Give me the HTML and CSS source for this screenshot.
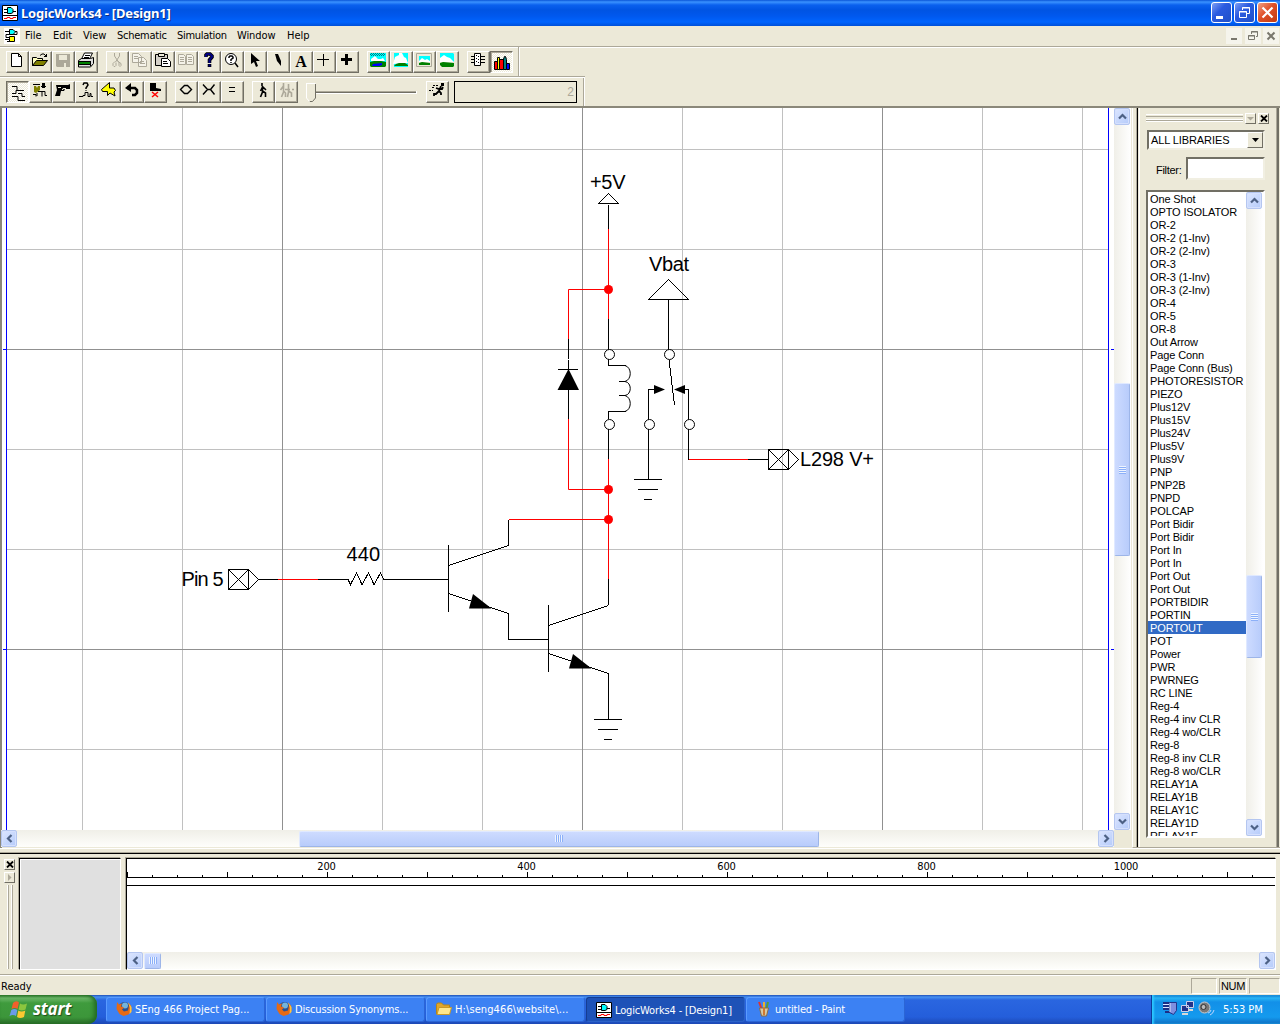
FILE: index.html
```html
<!DOCTYPE html>
<html lang="en">
<head>
<meta charset="utf-8">
<title>LogicWorks4 - [Design1]</title>
<link rel="stylesheet" href="styles.css">
</head>
<body>
<svg class="defs" width="0" height="0">
  <symbol id="app" viewBox="0 0 16 16"><path fill="#fff" stroke="#000" d="M.5.5h15v15H.5z"/><path stroke="#000" d="M2 4.500h3M2 7.500h3M11 6.500h3M1 10.500h14"/><path fill="#0ff" stroke="#000" d="M5.500 2.500H9l2 2v3l-2 1H5.500z"/><path fill="none" stroke="red" d="M2 13.500h3v-1h3v1h3v-1h3"/></symbol>
  <symbol id="doc" viewBox="0 0 16 16"><path fill="#fff" d="M0 0h16v16H0z"/><path fill="none" stroke="#000" d="M1 3.500h4M11 3.500h2v3h-11v3h4M1 11.500h4M3 13.500h3"/><path fill="#0ff" stroke="#000" d="M5.500 1.500H9l2 2v1l-2 2H5.500z"/><path fill="#ff0" stroke="#000" d="M5.500 8.500h5v5h-5z"/></symbol>
  <symbol id="new" viewBox="0 0 16 16"><path fill="#fff" stroke="#000" d="M2.500 1.500h7l3 3v10h-10zM9.500 1.500v3h3"/></symbol>
  <symbol id="open" viewBox="0 0 16 16"><path fill="#ffffc0" stroke="#000" d="M.5 13.500v-8h4l1 1h5v7z"/><path fill="#808000" stroke="#000" d="M.5 13.500l4-5h11l-4 5z"/><path fill="none" stroke="#000" d="M8 3.500l2-1.500h2l2 2M12 4.500h3M14.500 2v3"/></symbol>
  <symbol id="save" viewBox="0 0 16 16"><path fill="#aca899" d="M1 2h14v13H2l-1-1z"/><path fill="#ece9d8" d="M4 3h8v5H4zM9 11h2v4H9z"/></symbol>
  <symbol id="print" viewBox="0 0 16 16"><path fill="#fff" stroke="#000" d="M3.500 7l3-6h8l-3 6zM7 3.500h5M6 5.500h5"/><path fill="#ddd" stroke="#000" d="M.5 8.500l3-2h9l3-1v6l-3 3.500H.5z"/><path stroke="#008000" stroke-width="2" d="M1 11h11"/><path stroke="#000" d="M1 9.500h12M1 12.500h12M12.500 9v5"/></symbol>
  <symbol id="cut" viewBox="0 0 16 16"><path fill="none" stroke="#aca899" d="M5.500 1v3l4 6M10.500 1v3l-4 6M6 9.500l-2 2v2l1 1h1l1-1v-3M9 9.500l1 1v3l1 1 1-1v-2z"/></symbol>
  <symbol id="copy" viewBox="0 0 16 16"><path fill="#f5f3e9" stroke="#aca899" d="M.5 1.500h6l3 3v6h-9zM6.500 5.500h5l3 3v6h-8zM2 4.500h4M2 6.500h4M8 9.500h4M8 11.500h5"/></symbol>
  <symbol id="paste" viewBox="0 0 16 16"><path fill="#d4d0c8" stroke="#000" d="M.5 2.500h12v11H.5z"/><path fill="#ece9d8" stroke="#000" d="M3.500 1.500h6v3h-6z"/><path fill="#fff" stroke="#000" d="M6.500 6.500h6l3 3v5h-9zM8 9.500h4M8 11.500h5"/></symbol>
  <symbol id="dup" viewBox="0 0 16 16"><path fill="#f5f3e9" stroke="#aca899" d="M.5 2.500h5l2 2v8h-7zM8.500 2.500h5l2 2v8h-7zM2 5.500h4M2 7.500h4M2 9.500h4M10 5.500h4M10 7.500h4M10 9.500h4"/></symbol>
  <symbol id="help" viewBox="0 0 16 16"><path fill="none" stroke="#000" stroke-width="3.600" d="M5 5V3l1-1h3l2 2v1L8.500 8v3M8.500 12v3"/><path fill="none" stroke="#000080" stroke-width="2" d="M5 5V3l1-1h3l2 2v1L8.500 8v3M8.500 12.500v2"/></symbol>
  <symbol id="query" viewBox="0 0 16 16"><circle cx="7" cy="7" r="5.500" fill="#fff" stroke="#000"/><path fill="none" stroke="#000" stroke-width="1.500" d="M5 6V5l1-1h2l1 1v1L7 7.500V9M7 10v1M11 11l3 4"/></symbol>
  <symbol id="arrow" viewBox="0 0 16 16"><path d="M4 1l9 8H9l2 5-2 1-2-5-3 2z"/></symbol>
  <symbol id="pen" viewBox="0 0 16 16"><path d="M5 2h3l3 7v5L7 9z"/></symbol>
  <symbol id="plus" viewBox="0 0 16 16"><path stroke="#000" d="M1 7.500h12M7.500 2v12"/></symbol>
  <symbol id="boldplus" viewBox="0 0 16 16"><path stroke="#000" stroke-width="3" d="M2 7.500h11M7.500 2v11"/></symbol>
  <symbol id="land1" viewBox="0 0 16 14"><path fill="#0ff" d="M0 0h16v9H0z"/><path stroke="#008080" stroke-dasharray="1 1" d="M1 .5h14M0 1.500h16M1 2.500h14"/><path fill="#fff" d="M1 8V6l4-3 3 3h3l2-1 2 3z"/><path fill="green" d="M0 9l4-1h7l5 1v4l-1 1H1l-1-1z"/><path fill="#00f" d="M3 11l9-1v2l-3 1H2z"/></symbol>
  <symbol id="land2" viewBox="0 0 16 14"><path fill="#0ff" d="M1 0h14v14H1z"/><path fill="#fff" d="M0 11l2-7 4-2V0h3l2 4 2 1 2 5z"/><path fill="green" d="M3 11l3-1h6l3 2v1H1z"/></symbol>
  <symbol id="land3" viewBox="0 0 16 14"><path fill="#ece9d8" stroke="#aca899" d="M.5.5h15v13H.5z"/><path fill="#0ff" d="M3 3h11v5H3z"/><path fill="#fff" d="M3 8l3-3 3 2 2-1 3 2v1H3z"/><path fill="green" d="M3 10l3-1 8 1v2H3z"/></symbol>
  <symbol id="land4" viewBox="0 0 16 14"><path fill="#0ff" d="M1 0h13l1 1v8H1z"/><path fill="#fff" d="M1 9V5l4-3 3 2 3 1 4 4z"/><path fill="green" d="M1 10l3-1 11 1v3l-1 1H3l-2-2z"/></symbol>
  <symbol id="chip" viewBox="0 0 16 16"><path stroke="#000" d="M1 4.500h14M1 7.500h14M1 10.500h14"/><path fill="#fff" stroke="#000" d="M4.500 1.500h6v12h-6z"/><path stroke="#000" stroke-dasharray="1 2" d="M6.500 3v9M8.500 4v8"/></symbol>
  <symbol id="books" viewBox="0 0 16 16"><path fill="red" stroke="#000" d="M.5 6.500h3v8h-3zM5.500 4.500h4v10h-4z"/><path fill="#ff0" stroke="#000" d="M3.500 2.500h2v12h-2z"/><path fill="#008080" stroke="#000" d="M9.500 4l1-2.500h1l1 3v10h-3z"/><path fill="#00f" stroke="#000" d="M12.500 8.500h3v6h-3z"/></symbol>
  <symbol id="sig" viewBox="0 0 16 16"><path fill="none" stroke="#000" d="M2 1.500h5v4h7M2 8.500h4V5.500h3M2 11.500h6v4h7M8 8.500h4v3h3"/></symbol>
  <symbol id="probe" viewBox="0 0 16 16"><path fill="#808000" d="M2 4h2l1 2 1-2h2v4l-4 3-2-1z"/><path fill="none" stroke="#000" d="M1 2.500h7M9 4.500h5M1 12.500h3v2M5 11v3M6 9.500h4v5M10 9.500h3v4h2"/><path d="M10 1h3v5h-3z"/></symbol>
  <symbol id="gun" viewBox="0 0 16 16"><path d="M1 3h12l2-1v5h-5L9 9H6l-1 5H0l2-6z"/><path fill="none" stroke="#ece9d8" d="M3 5.500h3M7 7.500h1v-1h3"/></symbol>
  <symbol id="qsig" viewBox="0 0 16 16"><path fill="none" stroke="#000" stroke-width="1.500" d="M5 3l1-2h3l1 2-2 3v1"/><path fill="none" stroke="#000" d="M1 14.500h4v-1h2v-3h3v4h2v-3h1v3h2M8 8v1"/></symbol>
  <symbol id="bolt" viewBox="0 0 16 16"><path fill="#ff0" stroke="#000" d="M8.500.5L.5 7.500l1 2h5v4L9 11l5 3-1-4 1.500-1.500L13 6H8.500z"/></symbol>
  <symbol id="undo" viewBox="0 0 16 16"><path fill="none" stroke="#000" stroke-width="2.500" d="M3 6h8l2 2v3l-2 2H8"/><path d="M1 6l6-5v9z"/></symbol>
  <symbol id="kick" viewBox="0 0 16 16"><path d="M3 1h6v5l5 1v2H3z"/><path stroke="red" stroke-width="1.500" d="M5 10l6 5M11 10l-6 5"/></symbol>
  <symbol id="diamond" viewBox="0 0 16 16"><path fill="none" stroke="#000" stroke-width="1.400" d="M2.500 7.500l4-4h3l4 4-4 4h-3z"/></symbol>
  <symbol id="cross" viewBox="0 0 16 16"><path fill="none" stroke="#000" stroke-width="1.400" d="M2 2.500l4.500 5h3l4-5M2 12.500l4.500-5h3l4 5"/></symbol>
  <symbol id="equal" viewBox="0 0 16 16"><path stroke="#000" d="M5 5.500h6M5 9.500h6"/></symbol>
  <symbol id="walk" viewBox="0 0 16 16"><path fill="none" stroke="currentColor" stroke-width="1.600" d="M7 1v3M7.500 4v6l-2 5M7.500 9l3 2v4M7.500 5l-2 4M8 5l3 3"/></symbol>
  <symbol id="walks" viewBox="0 0 16 16"><path fill="none" stroke="currentColor" stroke-width="1.600" d="M5.500 1v9l-2 5M5.500 9l2 2v4M5.500 4l-3 4M10.500 2v8l-1 5M10.500 9l3 2v4M7 7.500h5M14 7.500h2"/></symbol>
  <symbol id="run" viewBox="0 0 16 16"><path d="M12 1h3v3h-3z"/><path fill="none" stroke="#000" stroke-width="1.800" d="M12 4l-2 5 2 2v2M10 9l-3 3H5v2M7 6l3 1h3l1-2"/><path stroke="#000" stroke-dasharray="2 1" d="M4 3.500h5M3 5.500h3M0 8.500h4"/></symbol>
  <symbol id="up" viewBox="0 0 9 9"><path fill="none" stroke="#4d6185" stroke-width="2.200" d="M1 6.500L4.500 3 8 6.500"/></symbol>
  <symbol id="down" viewBox="0 0 9 9"><path fill="none" stroke="#4d6185" stroke-width="2.200" d="M1 2.500L4.500 6 8 2.500"/></symbol>
  <symbol id="left" viewBox="0 0 9 9"><path fill="none" stroke="#4d6185" stroke-width="2.200" d="M6.500 1L3 4.500 6.500 8"/></symbol>
  <symbol id="right" viewBox="0 0 9 9"><path fill="none" stroke="#4d6185" stroke-width="2.200" d="M2.500 1L6 4.500 2.500 8"/></symbol>
  <symbol id="fox" viewBox="0 0 16 16"><circle cx="8.500" cy="7.500" r="6.500" fill="#2b4f8f"/><circle cx="9" cy="4.500" r="3" fill="#74b4da"/><path fill="#e66a15" d="M1 1l2 2.500 3-1-1 3 3 1-2 2 2 2 4-1 1-5-1-3 3 3 .5 5-3 4-5 1.500-4-2L.5 8z"/><path fill="#ffc23c" d="M12 1.500l3.500 4.500v5l-2 2 .5-6z"/></symbol>
  <symbol id="folder" viewBox="0 0 16 16"><path fill="#e0a62b" stroke="#b98512" d="M.5 13V3.500l1-1.500h4l2 2h6v9z"/><path fill="#ffe68a" stroke="#c99a28" d="M1 13.500l2-7h12.500l-2 7z"/></symbol>
  <symbol id="paint" viewBox="0 0 16 16"><path stroke="#d33" stroke-width="2" d="M3 1l3 8"/><path stroke="#e8b030" stroke-width="2" d="M8 1v8"/><path stroke="#579b36" stroke-width="2" d="M12 1l-2 8"/><path fill="#d8c9a0" stroke="#8a6a45" d="M3.500 7h9l-2 8h-5z"/><path stroke="#d07830" stroke-width="2" d="M8 7v7"/></symbol>
  <symbol id="xs" viewBox="0 0 8 7"><path stroke="#000" stroke-width="1.800" d="M1 .5l6 6M7 .5l-6 6"/></symbol>
</svg>

<div class="screen">
  <header class="titlebar">
    <svg class="i16"><use href="#app"/></svg><span class="title">LogicWorks4 - [Design1]</span>
    <div class="winbtns">
      <div class="wb"><svg width="19" height="19"><path fill="#fff" d="M4 13h7v3H4z"/></svg></div>
      <div class="wb"><svg width="19" height="19"><path fill="none" stroke="#fff" d="M7.500 7V4.500h7v6H12M7 5h8M4.500 8.500h7v6h-7zM4 9h8"/></svg></div>
      <div class="wb close"><svg width="19" height="19"><path stroke="#fff" stroke-width="2.200" d="M4.500 4.500l10 10M14.500 4.500l-10 10"/></svg></div>
    </div>
  </header>
  <nav class="menubar">
    <svg class="i16"><use href="#doc"/></svg>
    <span class="m1">File</span><span class="m2">Edit</span><span class="m3">View</span><span class="m4">Schematic</span><span class="m5">Simulation</span><span class="m6">Window</span><span class="m7">Help</span>
    <div class="mdi">
      <div><svg width="16" height="16"><path fill="#79776d" d="M5 10h6v2H5z"/></svg></div>
      <div><svg width="16" height="16"><path fill="none" stroke="#79776d" d="M6.500 6V3.500h6v5H11M6 4h7M3.500 7.500h6v4h-6zM3 8h7"/></svg></div>
      <div><svg width="16" height="16"><path stroke="#79776d" stroke-width="2" d="M4.500 4.500l7 7M11.500 4.500l-7 7"/></svg></div>
    </div>
  </nav>

  <div class="bars">
    <div class="bar bar1">
      <div class="grp"><b class="btn"><svg class="i16"><use href="#new"/></svg></b><b class="btn"><svg class="i16"><use href="#open"/></svg></b><b class="btn"><svg class="i16"><use href="#save"/></svg></b><b class="btn"><svg class="i16"><use href="#print"/></svg></b></div>
      <div class="grp"><b class="btn"><svg class="i16"><use href="#cut"/></svg></b><b class="btn"><svg class="i16"><use href="#copy"/></svg></b><b class="btn"><svg class="i16"><use href="#paste"/></svg></b><b class="btn"><svg class="i16"><use href="#dup"/></svg></b><b class="btn"><svg class="i16"><use href="#help"/></svg></b><b class="btn"><svg class="i16"><use href="#query"/></svg></b><b class="btn"><svg class="i16"><use href="#arrow"/></svg></b><b class="btn"><svg class="i16"><use href="#pen"/></svg></b><b class="btn letter">A</b><b class="btn"><svg class="i16"><use href="#plus"/></svg></b><b class="btn"><svg class="i16"><use href="#boldplus"/></svg></b></div>
      <div class="grp"><b class="btn"><svg class="land"><use href="#land1"/></svg></b><b class="btn"><svg class="land"><use href="#land2"/></svg></b><b class="btn"><svg class="land"><use href="#land3"/></svg></b><b class="btn"><svg class="land"><use href="#land4"/></svg></b></div>
      <div class="grp"><b class="btn"><svg class="i16"><use href="#chip"/></svg></b><b class="btn on"><svg class="i16"><use href="#books"/></svg></b></div>
    </div>
    <div class="bar bar2">
      <div class="grp"><b class="btn on"><svg class="i16"><use href="#sig"/></svg></b><b class="btn"><svg class="i16"><use href="#probe"/></svg></b><b class="btn"><svg class="i16"><use href="#gun"/></svg></b><b class="btn"><svg class="i16"><use href="#qsig"/></svg></b><b class="btn"><svg class="i16"><use href="#bolt"/></svg></b><b class="btn"><svg class="i16"><use href="#undo"/></svg></b><b class="btn"><svg class="i16"><use href="#kick"/></svg></b></div>
      <div class="grp"><b class="btn"><svg class="i16"><use href="#diamond"/></svg></b><b class="btn"><svg class="i16"><use href="#cross"/></svg></b><b class="btn"><svg class="i16"><use href="#equal"/></svg></b></div>
      <div class="grp"><b class="btn"><svg class="i16"><use href="#walk"/></svg></b><b class="btn off"><svg class="i16"><use href="#walks"/></svg></b></div>
      <svg class="slider" width="112" height="22"><path stroke="#aca899" d="M10 10.500h100"/><path stroke="#716f64" d="M10 11.500h100"/><path stroke="#fff" d="M10 12.500h101M110.500 10v3"/><path fill="#ece9d8" stroke="#fff" d="M.5 16V2.500h9"/><path fill="#ece9d8" d="M1 3h8v14l-4 3-4-4z"/><path fill="none" stroke="#716f64" d="M9.500 3v14l-3 3.500h-3"/><path fill="none" stroke="#fff" d="M.5 2v15l3 3.500"/></svg>
      <b class="btn"><svg class="i16"><use href="#run"/></svg></b>
      <div class="speed">2</div>
    </div>
  </div>

  <main class="work">
    <section class="doc">
      <svg class="canvas" width="1112" height="722" viewBox="2 108 1112 722">
        <g class="grid"><path d="M82.500 108v722M182.500 108v722M382.500 108v722M482.500 108v722M682.500 108v722M782.500 108v722M982.500 108v722M1082.500 108v722M7 149.500h1101M7 249.500h1101M7 449.500h1101M7 549.500h1101M7 749.500h1101"/>
        <path class="major" d="M282.500 108v722M582.500 108v722M882.500 108v722M7 349.500h1101M7 649.500h1101"/>
        <path class="page" d="M6.500 108v722M1108.500 108v722M3 349.500h3M3 649.500h3M1111 349.500h3M1111 649.500h3"/></g>
        <g class="ink">
          <path d="M598.500 203.500l10-10 10 10zM608.500 205v24M608.500 319v36M608.500 359v6.500h17M608.500 419v-7.500h17M608.500 425v34M608.500 579v26"/>
          <path d="M568.500 339v20M568.500 360v10M558 369.500h20M568.500 390v29"/>
          <path d="M648.500 299.500l20-20 20 20zM668.500 300v50M669 360l5.500 45M655 389.500h-6.500V479M684 389.500h4.500V459.500M748 459.500h20"/>
          <path d="M634 479.500h28M638 489.500h20M644 499.500h8M594 719.500h28M598 729.500h20M604 739.500h8"/>
          <path d="M768.500 449.500h20v20h-20zM768.500 449.500l20 20 10-10-10-10-20 20"/>
          <path d="M228.500 569.500h20v20h-20zM228.500 569.500l20 20 10-10-10-10-20 20"/>
          <path d="M258 579.500h20M318 579.500h30l2.500 5 6-11.500 5.500 11.500 6.500-11.500 5.500 11.500 6.500-11.500 3.500 6.500h64.500"/>
          <path d="M448.500 545v67M448.500 565.500l60-20V520M448.500 593.500l60 20v26h40M548.500 605v67M548.500 625.500l60-20M548.500 653.500l60 20V719"/>
        </g>
        <path class="curve" d="M625 365.500c7 2 7 14 0 16h-6M625 381.500c7 1 7 13 0 14h-6M625 395.500c7 2 7 14 0 16"/>
        <path class="net" d="M608.500 229v90M608.500 289.500h-40V339M568.500 419v70.500h40M608.500 459v120M509 519.500h99M689 459.500h59M278 579.500h40"/>
        <path d="M568.500 369l10.500 21h-21.500zM654 385v9l11-4.500zM685 385v9l-11-4.500zM473 594l-4 14.500h22.500zM573 654l-4 14.500h22.500z"/>
        <g class="pin"><circle cx="609.500" cy="354.500" r="5"/><circle cx="609.500" cy="424.500" r="5"/><circle cx="669.500" cy="354.500" r="5"/><circle cx="649.500" cy="424.500" r="5"/><circle cx="689.500" cy="424.500" r="5"/></g>
        <g class="dot"><circle cx="608.500" cy="289.500" r="4.500"/><circle cx="608.500" cy="489.500" r="4.500"/><circle cx="608.500" cy="519.500" r="4.500"/></g>
        <g class="label"><text x="590" y="189" textLength="35.500">+5V</text><text x="649" y="271" textLength="40">Vbat</text><text x="800" y="466" textLength="74">L298 V+</text><text x="346.500" y="561" textLength="33.500">440</text><text x="181.500" y="586" textLength="42">Pin 5</text></g>
      </svg>
      <div class="vs vs-doc"><i class="sb"><svg class="i9"><use href="#up"/></svg></i><i class="thumb t1"><span class="gv"></span></i><i class="sb"><svg class="i9"><use href="#down"/></svg></i></div>
      <div class="hs hs-doc"><i class="sb"><svg class="i9"><use href="#left"/></svg></i><i class="thumb t2"><span class="gh"></span></i><i class="sb"><svg class="i9"><use href="#right"/></svg></i></div>
    </section>
    <aside class="lib">
      <div class="libgrip"><div class="rails"></div><b class="mini"><svg width="9" height="9"><path fill="#aca899" d="M1 3h7L4.500 6.500z"/></svg></b><b class="mini"><svg width="8" height="7"><use href="#xs"/></svg></b></div>
      <div class="combo"><span>ALL LIBRARIES</span><b class="drop"><svg width="9" height="5"><path d="M1 0h7L4.500 4z"/></svg></b></div>
      <div class="filter"><span>Filter:</span><div class="field"></div></div>
      <div class="list">
        <ul>
          <li>One Shot</li><li>OPTO ISOLATOR</li><li>OR-2</li><li>OR-2 (1-Inv)</li><li>OR-2 (2-Inv)</li><li>OR-3</li><li>OR-3 (1-Inv)</li><li>OR-3 (2-Inv)</li><li>OR-4</li><li>OR-5</li><li>OR-8</li><li>Out Arrow</li><li>Page Conn</li><li>Page Conn (Bus)</li><li>PHOTORESISTOR</li><li>PIEZO</li><li>Plus12V</li><li>Plus15V</li><li>Plus24V</li><li>Plus5V</li><li>Plus9V</li><li>PNP</li><li>PNP2B</li><li>PNPD</li><li>POLCAP</li><li>Port Bidir</li><li>Port Bidir</li><li>Port In</li><li>Port In</li><li>Port Out</li><li>Port Out</li><li>PORTBIDIR</li><li>PORTIN</li><li class="sel">PORTOUT</li><li>POT</li><li>Power</li><li>PWR</li><li>PWRNEG</li><li>RC LINE</li><li>Reg-4</li><li>Reg-4 inv CLR</li><li>Reg-4 wo/CLR</li><li>Reg-8</li><li>Reg-8 inv CLR</li><li>Reg-8 wo/CLR</li><li>RELAY1A</li><li>RELAY1B</li><li>RELAY1C</li><li>RELAY1D</li><li>RELAY1E</li>
        </ul>
        <div class="vs"><i class="sb"><svg class="i9"><use href="#up"/></svg></i><i class="thumb t3"><span class="gv"></span></i><i class="sb"><svg class="i9"><use href="#down"/></svg></i></div>
      </div>
    </aside>
  </main>

  <section class="timing">
    <div class="tgrip"><b class="mini"><svg width="8" height="7"><use href="#xs"/></svg></b><b class="mini"><svg width="9" height="9"><path fill="#aca899" d="M3 1v7l3.500-3.500z"/></svg></b><div class="vrails"></div></div>
    <div class="names"></div>
    <div class="wave">
      <svg width="1148" height="93" viewBox="127 859 1148 93"><path class="axis" d="M127 877.500h1148M127 885.500h1148"/>
        <path class="minor" d="M127 876h1148"/><path class="majort" d="M127 874.500h1148"/>
        <g class="nums"><text x="326.500" y="870">200</text><text x="526.500" y="870">400</text><text x="726.500" y="870">600</text><text x="926.500" y="870">800</text><text x="1126" y="870">1000</text></g></svg>
      <div class="hs"><i class="sb"><svg class="i9"><use href="#left"/></svg></i><i class="thumb t4"><span class="gh"></span></i><i class="sb"><svg class="i9"><use href="#right"/></svg></i></div>
    </div>
  </section>

  <footer class="status"><span class="ready">Ready</span><div class="cell c1"></div><div class="cell c2">NUM</div><div class="cell c3"></div></footer>

  <div class="taskbar">
    <div class="start"><svg width="20" height="20" viewBox="0 0 20 20"><path fill="#f0602c" d="M4 3q3-3 6-.5L8.500 9Q5.500 7 2.500 9z"/><path fill="#8cc63e" d="M11 3.500q3 2 7 0L16.500 9.500q-4 2-7 0z"/><path fill="#6a9bea" d="M2.300 10q3-2 6 0L7 16q-3-2-6.500 0z"/><path fill="#fbc832" d="M9.300 10.500q3 2 7 0L15 17q-4 2-7 0z"/></svg><span>start</span></div>
    <div class="tasks">
      <div class="task"><svg class="i16"><use href="#fox"/></svg><span>SEng 466 Project Pag...</span></div>
      <div class="task"><svg class="i16"><use href="#fox"/></svg><span class="tight">Discussion Synonyms...</span></div>
      <div class="task"><svg class="i16"><use href="#folder"/></svg><span class="loose">H:\seng466\website\...</span></div>
      <div class="task active"><svg class="i16"><use href="#app"/></svg><span class="tight">LogicWorks4 - [Design1]</span></div>
      <div class="task"><svg class="i16"><use href="#paint"/></svg><span class="tight">untitled - Paint</span></div>
    </div>
    <div class="tray">
      <svg width="54" height="18"><path fill="#7e8fe0" stroke="#23358c" d="M7.500 2.500h7v8l-3 4-4-2z"/><path stroke="#1b2f86" stroke-width="2" d="M1 3h6M1 6h6M1 9h6M3 12h5"/><path stroke="#dbe4ff" d="M1 4.500h6M1 7.500h6M8 3v9"/><path fill="#22348a" stroke="#c9d0ea" d="M24.500 1.500h7v6h-7zM19.500 5.500h7v6h-7z"/><path fill="#d8d8d8" d="M20 13h6v2h-6zM26 9h5v2h-5z"/><circle cx="42.500" cy="7.500" r="5.500" fill="#777" stroke="#ccc"/><circle cx="41.500" cy="7" r="2.500" fill="#bbb" stroke="#333"/><path fill="none" stroke="#bcd6ff" d="M46 13q2 0 3-3M48 15q3-1 4-5"/></svg>
      <span>5:53 PM</span>
    </div>
  </div>
</div>
</body>
</html>
```
FILE: styles.css
```css
* { box-sizing: border-box; }
body { margin: 0; width: 1280px; height: 1024px; overflow: hidden; background: #ece9d8; font: 11px "DejaVu Sans Condensed", "DejaVu Sans", sans-serif; color: #000; }
svg { display: block; flex: none; }
.defs { position: absolute; }
.i16 { width: 16px; height: 16px; }
.i9 { width: 9px; height: 9px; }
.land { width: 16px; height: 14px; }
.screen { display: flex; flex-direction: column; width: 1280px; height: 1024px; }

.titlebar { flex: none; height: 26px; display: flex; align-items: center; padding: 0 2px 1px; background: linear-gradient(#0a55d8 0, #3a92ff 2px, #0a60ee 5px, #0054e3 10px, #0058ee 16px, #0064fe 22px, #0050d8 26px); }
.title { margin-left: 3px; padding-top: 1px; color: #fff; font: bold 13px "Noto Sans", sans-serif; letter-spacing: -.18px; white-space: nowrap; text-shadow: 1px 1px 0 #0a2d80; }
.winbtns { margin-left: auto; display: flex; gap: 2px; }
.wb { width: 21px; height: 21px; border: 1px solid #fff; border-radius: 3px; background: linear-gradient(135deg, #7d9ff5, #2b5be0 40%, #2050c8); }
.close { background: linear-gradient(135deg, #f0a084, #e05028 45%, #c03a12); }

.menubar { flex: none; height: 20px; display: flex; align-items: center; padding: 0 0 1px 4px; white-space: nowrap; }
.menubar > .i16 { margin-right: 5px; }
.menubar span { line-height: 18px; }
.m1 { width: 28px; } .m2 { width: 30px; } .m3 { width: 34px; } .m4 { width: 60px; letter-spacing: -.25px; } .m5 { width: 60px; letter-spacing: -.3px; } .m6 { width: 50px; letter-spacing: -.1px; } .m7 { width: 30px; }
.mdi { margin-left: auto; display: flex; gap: 2.500px; padding-right: 1px; }
.mdi div { width: 16px; height: 16px; background: #f5f4ec; }

.bars { flex: none; height: 62px; border-top: 1px solid #aca899; border-bottom: 2px solid #8b887a; box-shadow: inset 0 1px #fff; }
.bar { display: flex; gap: 8px; padding-left: 6px; }
.bar1 { width: 520px; height: 29px; padding-top: 4px; border-right: 1px solid #fff; box-shadow: inset -1px 0 #aca899; }
.bar2 { width: 585px; height: 30px; padding-top: 4px; border-top: 1px solid #aca899; box-shadow: inset 0 1px #fff, inset -1px 0 #fff, inset -2px 0 #aca899; }
.grp { display: flex; }
.btn { width: 23px; height: 22px; flex: none; display: flex; align-items: center; justify-content: center; padding: 0 1px 4px 0; border: 1px solid; border-color: #fff #716f64 #716f64 #fff; box-shadow: inset -1px -1px #aca899; }
.btn.on { border-color: #716f64 #fff #fff #716f64; box-shadow: inset 1px 1px #aca899; background: repeating-conic-gradient(#fff 0 25%, #ece9d8 0 50%) 0 0 / 2px 2px; padding: 1px 0 0 1px; }
.btn.off { color: #aca899; }
.btn.letter { padding-bottom: 1px; font: bold 16px "Liberation Serif", serif; }
.speed { width: 123px; height: 22px; margin-left: -3px; border: 1px solid #000; padding: 0 2px; text-align: right; color: #aca899; font: 12px/20px "Liberation Sans", sans-serif; }

.work { flex: none; height: 740px; display: flex; }
.doc { width: 1132px; height: 740px; display: grid; grid-template: 722px 18px / 1112px 18px; border-left: 2px solid #8b887a; }
.canvas { background: #fff; }
.grid path { fill: none; stroke: silver; }
.grid .major { stroke: #909090; }
.grid .page { stroke: #00f; }
.ink path { fill: none; stroke: #000; shape-rendering: crispEdges; }
.curve { fill: none; stroke: #000; }
.net { fill: none; stroke: red; }
.pin circle { fill: #fff; stroke: #000; }
.dot circle { fill: red; }
.label { font: 20px "Liberation Sans", sans-serif; }

i { display: flex; }
.vs { width: 17px; display: flex; flex-direction: column; align-items: flex-start; background: linear-gradient(90deg, #f0efe8, #fff); }
.hs { height: 17px; display: flex; align-items: center; background: linear-gradient(#f0efe8, #fefefb); }
.hs-doc { margin-left: -1px; }
.sb { width: 16px; height: 17px; flex: none; align-items: center; justify-content: center; border: 1px solid #b4c6f0; border-radius: 2px; background: linear-gradient(135deg, #dce6ff, #b5cbfa); box-shadow: inset 0 0 0 1px #d5e0fd; }
.thumb { flex: none; align-items: center; justify-content: center; border: 1px solid #9db5e8; border-top-color: #e0e9ff; border-left-color: #e0e9ff; border-radius: 2px; background: #c6d5fd; }
.vs .thumb { width: 16px; background: linear-gradient(90deg, #cddbff, #b8ccfb); }
.hs .thumb { height: 16px; background: linear-gradient(#cddbff, #b8ccfb); }
.vs .sb:last-child, .hs .sb:last-child { margin-top: auto; }
.hs .sb:last-child { margin: 0 0 0 auto; }
.gv { width: 7px; height: 8px; background: repeating-linear-gradient(#eef4ff 0 1px, #8cb0f8 1px 2px); }
.gh { width: 8px; height: 7px; background: repeating-linear-gradient(90deg, #eef4ff 0 1px, #8cb0f8 1px 2px); }
.t1 { height: 173px; margin-top: 258px; }
.t2 { width: 520px; margin-left: 282px; }
.t3 { height: 83px; margin-top: 366px; }
.t4 { width: 17px; margin-left: 1px; }

.lib { width: 148px; height: 740px; border-left: 1px solid #fff; border-bottom: 1px solid #aca899; background: linear-gradient(90deg, transparent 3px, #aca899 3px 4px, #000 4px 5px, transparent 5px 6px, #fff 6px 7px, transparent 7px 143px, #aca899 143px 144px, #716f64 144px 146px, transparent 146px); padding: 4px 14px 0 13px; }
.libgrip { display: flex; height: 12px; gap: 2px; align-items: center; width: 124px; }
.rails { width: 97px; height: 8px; border: 1px solid #fff; border-width: 1px 0; background: linear-gradient(transparent 1px, #aca899 1px 2px, transparent 2px 4px, #fff 4px 5px, #aca899 5px 6px, transparent 6px); }
.mini { width: 11px; height: 11px; flex: none; display: flex; align-items: center; justify-content: center; border: 1px solid; border-color: #fff #716f64 #716f64 #fff; }
.combo { display: flex; width: 118px; height: 20px; margin: 6px 0 0 1px; border: 2px solid; border-color: #716f64 #f1efe2 #f1efe2 #716f64; background: #fff; font: 11px/16px "Liberation Sans", sans-serif; letter-spacing: -.1px; padding-left: 2px; white-space: nowrap; }
.drop { margin-left: auto; width: 16px; height: 16px; display: flex; align-items: center; justify-content: center; background: #ece9d8; border: 1px solid; border-color: #fff #716f64 #716f64 #fff; }
.filter { display: flex; height: 23px; margin-top: 7px; width: 119px; padding-left: 10px; font: 11px/26px "Liberation Sans", sans-serif; letter-spacing: -.3px; }
.field { margin-left: auto; width: 79px; background: #fff; border: 2px solid; border-color: #716f64 #f1efe2 #f1efe2 #716f64; }
.list { display: flex; width: 119px; height: 648px; margin-top: 10px; border: 2px solid; border-color: #716f64 #fff #fff #716f64; background: #fff; overflow: hidden; }
.list ul { margin: 0; padding: 0; width: 98px; list-style: none; font: 11px/15px "Liberation Sans", sans-serif; letter-spacing: -.12px; white-space: nowrap; }
.list li { height: 13px; padding-left: 2px; }
.sel { background: #316ac5; color: #fff; }

.timing { flex: none; height: 126px; border-top: 1px solid #fff; display: flex; padding-top: 9px; background: linear-gradient(transparent 3px, #aca899 3px 4px, #000 4px 5px, transparent 5px); }
.tgrip { width: 19px; display: flex; flex-direction: column; align-items: flex-end; padding: 1px 4px 0 0; gap: 2px; }
.vrails { width: 7px; height: 84px; margin-right: 1px; background: linear-gradient(90deg, #fff 1px, #aca899 1px 2px, transparent 2px 4px, #fff 4px 5px, #aca899 5px 6px, transparent 6px); }
.names { width: 102px; height: 112px; background: #e0e0e0; border: 1px solid; border-color: #000 #fff #fff #000; box-shadow: inset 1px 1px #fff, -1px -1px #aca899; }
.wave { width: 1150px; height: 112px; margin-left: 5px; border: 1px solid; border-color: #000 #fff #fff #000; background: #fff; box-shadow: -1px -1px #aca899; }
.axis { stroke: #000; }
.minor { stroke: #000; stroke-width: 2; stroke-dasharray: 1 24; }
.majort { stroke: #000; stroke-width: 5; stroke-dasharray: 1 99; }
.nums { font: 11px "DejaVu Sans Condensed", sans-serif; letter-spacing: -.2px; text-anchor: middle; }

.status { flex: none; height: 21px; display: flex; border-top: 1px solid #aca899; box-shadow: inset 0 1px #fff; padding: 3px 0 1px 1px; gap: 2px; }
.ready { margin-right: auto; line-height: 17px; }
.cell { border: 1px solid; border-color: #aca899 #fff #fff #aca899; font: 11px/15px "Liberation Sans", sans-serif; letter-spacing: -.4px; text-align: center; }
.c1 { width: 26px; } .c2 { width: 28px; } .c3 { width: 31px; }

.taskbar { flex: none; height: 29px; display: flex; background: linear-gradient(#1f4fb8, #4791f0 2px, #2a66e0 5px, #245edb 22px, #1c48b4); color: #fff; }
.start { width: 97px; display: flex; align-items: center; padding-left: 9px; gap: 4px; border-radius: 0 9px 9px 0; background: linear-gradient(#2e7b2d, #6db86a 3px, #3f9b3d 8px, #3c963a 22px, #2a6d29); box-shadow: inset -3px 0 4px #236b22; font: italic bold 17px "Open Sans", sans-serif; text-shadow: 1px 1px 1px #1d4d1c; }
.start span { padding-bottom: 2px; letter-spacing: -.2px; }
.tasks { display: flex; gap: 1px; padding: 2px 0 0 9px; }
.task { width: 159px; height: 25px; display: flex; align-items: center; padding: 0 0 1px 9px; gap: 3px; border-radius: 3px; background: #3c81f3; border: 1px solid #2b65d5; border-top-color: #5a9bff; border-left-color: #5a9bff; white-space: nowrap; }
.tight { letter-spacing: -.15px; }
.loose { letter-spacing: .1px; }
.active { background: #1e52b7; border-color: #153d92 #2b62c8 #2b62c8 #153d92; padding-top: 2px; }
.tray { margin-left: auto; width: 129px; display: flex; align-items: center; padding: 0 0 1px 10px; gap: 7px; border-left: 1px solid #0b3d9c; background: linear-gradient(#0f6fc8, #28b5f5 3px, #1290e8 7px, #149aee 22px, #0e6cc0); box-shadow: inset 2px 0 2px #2cc8ff; white-space: nowrap; }
```
